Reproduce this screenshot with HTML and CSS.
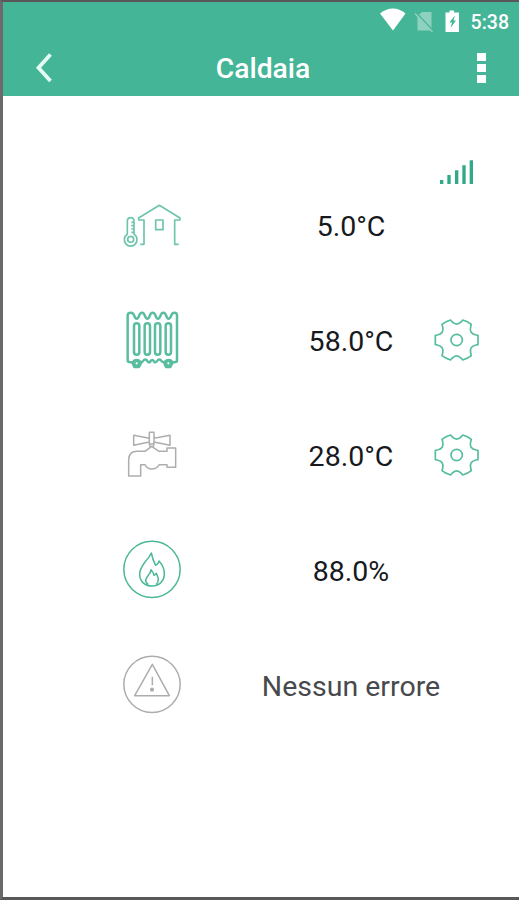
FILE: index.html
```html
<!DOCTYPE html>
<html lang="it">
<head>
<meta charset="utf-8">
<title>Caldaia</title>
<link rel="stylesheet" href="styles.css">
</head>
<body>
<div class="screen">
  <header class="header">
    <div class="status">
      <svg class="status-icons" width="84" height="28" viewBox="0 0 84 28">
        <path class="solid" d="M0 11Q13 1 25.500 11L13 28Z" transform="translate(0 .5)"/>
        <path class="faded" d="M42 10H51.500V28.500H37.500V14Z"/>
        <path class="gap-line" d="M36 10.500L53 28.500"/>
        <path class="faded-line" d="M35 11.500L52.500 30"/>
        <path class="solid" d="M69.500 8.500H74V10.500H79V30H65.500V10.500H69.500Z"/>
        <path class="bolt" d="M75 13.500L69.300 20.500H72L70.500 26L76 18.500H73.500Z"/>
      </svg>
      <span class="clock">5:38</span>
    </div>
    <div class="titlebar">
      <svg class="back" width="20" height="32" viewBox="0 0 20 32"><path d="M17.500 2.500L5.500 15.700L17.500 29"/></svg>
      <h1 class="title">Caldaia</h1>
      <div class="menu"><i></i><i></i><i></i></div>
    </div>
  </header>
  <main class="readings">
    <section class="row">
      <svg class="icon thin" viewBox="36 18 180 183">
        <path d="M52 133V94Q52 83 62 83Q72 83 72 94V133A19 19 0 1 1 52 133ZM64 97H72M64 107H72M64 117H72M64 127H72"/>
        <circle cx="62" cy="148" r="9"/>
        <path d="M91 163H102V90H86V84L148 46L210 84V90H194V163H206M137 90H159V119H137Z"/>
      </svg>
      <span class="value">5.0°C</span>
      <svg class="signal" width="36" height="30" viewBox="42 21 108 90"><path d="M50 90V102M72 75V102M95 61V102M117 46V102M139 31V102"/></svg>
    </section>
    <section class="row">
      <svg class="icon bold" viewBox="36 33 180 183">
        <path d="M53 181V46Q53 38 63 38Q70 38 73 48Q76 56 80 56Q84 56 87 48Q90 38 96 38Q102 38 105 48Q108 56 112 56Q116 56 119 48Q122 38 128 38Q134 38 137 48Q140 56 144 56Q148 56 151 48Q154 38 160 38Q166 38 169 48Q172 56 176 56Q180 56 183 48Q186 38 193 38Q201 38 201 46V181Q201 187 193 187H187Q184 180 176 180Q168 180 164 187Q156 187 152 180Q148 177 144 180Q140 187 134 187Q130 180 127 180Q123 180 119 187Q113 187 110 180Q106 177 102 180Q98 187 91 187Q88 180 80 180Q72 180 69 187H62Q53 187 53 181Z"/>
        <rect x="72" y="70" width="16" height="94" rx="8"/><rect x="104" y="70" width="16" height="94" rx="8"/><rect x="135" y="70" width="16" height="94" rx="8"/><rect x="167" y="70" width="16" height="94" rx="8"/>
        <path d="M67 187L73 201H87L94 187M162 187L168 201H181L188 187"/>
        <circle cx="80" cy="190" r="7"/><circle cx="175" cy="190" r="7"/>
      </svg>
      <span class="value">58.0°C</span>
      <svg class="gear" viewBox="42 18 138 183"><use href="#gear-shape"/></svg>
    </section>
    <section class="row">
      <svg class="icon off" viewBox="36 18 180 183">
        <path d="M118 37H132V72H118ZM118 55L71 46V76L118 66M132 55L180 46V76L132 66M118 72L121 82M132 72L129 82"/>
        <path d="M56 168V120Q56 94 82 94H105L125 79L147 94H171V84H197V142H171V134H148Q140 147 125 147Q112 147 105 134H92V168Z"/>
      </svg>
      <span class="value">28.0°C</span>
      <svg class="gear" viewBox="42 18 138 183">
        <g id="gear-shape">
          <path d="M92 45L96 50Q110 65 124 50L128 45Q143 49 154 58L152 65Q147 86 168 90L174 91V119L168 120Q147 124 152 145L154 152Q143 161 128 165L124 160Q110 145 96 160L92 165Q77 161 66 152L68 145Q73 124 52 120L46 119V91L52 90Q73 86 68 65L66 58Q77 49 92 45Z"/>
          <circle cx="110" cy="105" r="17"/>
        </g>
      </svg>
    </section>
    <section class="row">
      <svg class="icon" viewBox="36 33 180 183">
        <circle cx="126" cy="118" r="84.500"/>
        <path d="M124 69Q128 90 137 106Q145 103 147 93C158 105 164 120 163 135C161 155 147 168 126 168C104 168 90 154 89 134C88 115 101 102 108 92Q118 82 124 69Z"/>
        <path d="M115 164C101 153 109 144 115 136Q122 128 123 119Q130 126 132 136L139 130C144 140 150 152 138 164"/>
      </svg>
      <span class="value">88.0%</span>
    </section>
    <section class="row">
      <svg class="icon off" viewBox="36 33 180 183">
        <circle cx="126" cy="118" r="84.500"/>
        <path d="M127 58L178 152H74ZM127 95V121"/>
        <circle class="dot" cx="126" cy="134" r="4"/>
      </svg>
      <span class="value message">Nessun errore</span>
    </section>
  </main>
</div>
</body>
</html>
```
FILE: styles.css
```css
* { box-sizing: border-box; }
body { margin: 0; font-family: Roboto, sans-serif; background: #fff; }
.screen {
  height: 900px;
  border: solid #59575a;
  border-width: 2px 0 3px 3px;
  border-left-color: #6b696c;
  overflow: hidden;
}
svg { display: block; fill: none; overflow: visible; }
.header { height: 94px; background: #45b597; color: #fff; }
.status {
  height: 36px;
  display: flex;
  justify-content: flex-end;
  align-items: flex-start;
  padding-right: 10px;
}
.status-icons { margin-right: 7px; }
.solid { fill: #fff; }
.faded { fill: #8fd1bf; }
.faded-line { stroke: #8fd1bf; stroke-width: 1.5; }
.gap-line { stroke: #45b597; stroke-width: 1.3; }
.bolt { fill: #45b597; }
.clock { font-size: 19.5px; font-weight: 500; line-height: 41px; }
.titlebar {
  height: 58px;
  display: grid;
  grid-template-columns: 32px 1fr 30px;
  align-items: center;
  padding: 2px 23px 0 30px;
}
.back { stroke: #e4fbf3; stroke-width: 3.8; }
.title { margin: 0; padding: 0 5px 0 0; font-size: 28.3px; font-weight: 500; text-align: center; }
.menu { display: grid; gap: 3px; justify-content: center; }
.menu i { width: 9px; height: 8px; background: #fff; }
.readings { padding: 73px 0 0 89px; }
.row {
  height: 115px;
  display: grid;
  grid-template-columns: 120px 222px 46px;
  align-items: center;
}
.icon { width: 60px; height: 61px; margin-left: 30px; stroke: #4bb899; stroke-width: 4.5; stroke-linejoin: round; }
.thin { stroke-width: 5; stroke: #6cc5ac; }
.bold { stroke-width: 7.5; stroke: #5abd9f; }
.off { stroke: #adadad; stroke-width: 4.5; }
.dot { fill: #adadad; }
.value {
  display: flex;
  justify-content: center;
  padding-left: 56px;
  white-space: nowrap;
  font-size: 28.5px;
  color: #17191d;
}
.message { color: #48494c; }
.gear { width: 46px; height: 61px; stroke: #55bd9f; stroke-width: 5; stroke-linejoin: round; }
.signal { align-self: start; margin: -12px 0 0 5px; stroke: #2fa987; stroke-width: 10; }
```
